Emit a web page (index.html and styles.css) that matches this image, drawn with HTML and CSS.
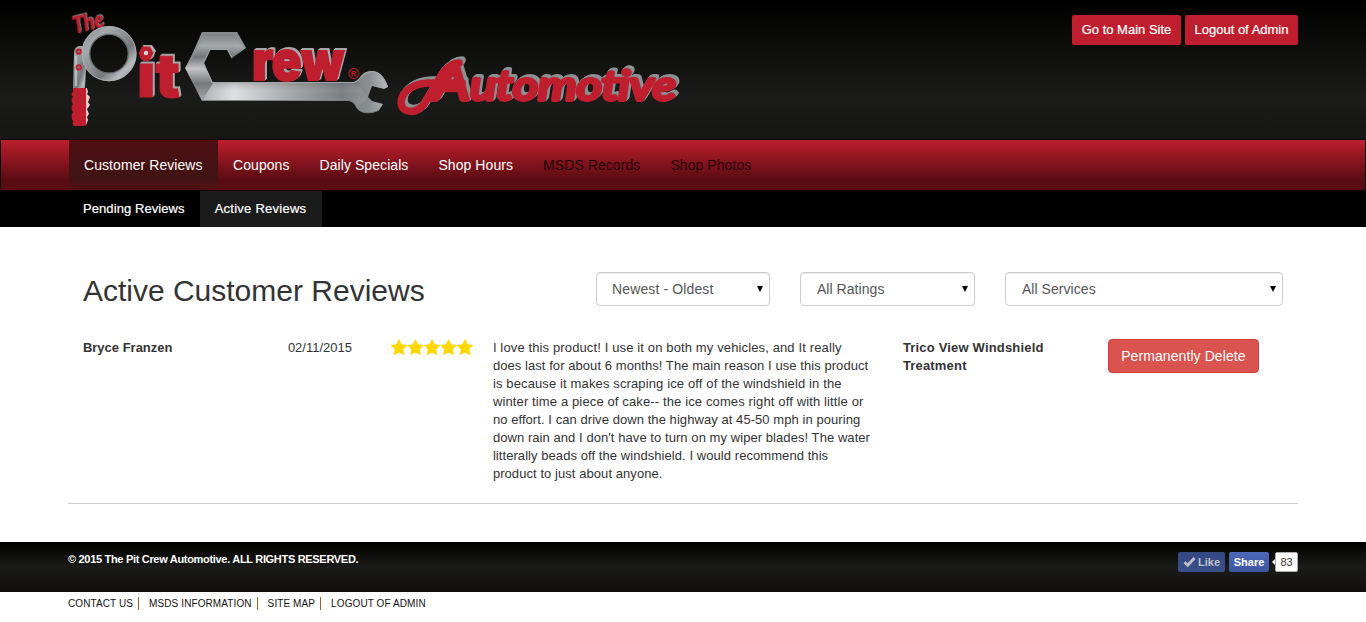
FILE: index.html
```html
<!DOCTYPE html>
<html lang="en">
<head>
<meta charset="utf-8">
<title>Active Customer Reviews</title>
<link rel="stylesheet" href="styles.css">
</head>
<body>
<header class="header">
  <div class="container header-inner">
    <svg class="logo" width="620" height="138" viewBox="68 0 620 138" role="img" aria-label="The Pit Crew Automotive">
      <defs>
        <linearGradient id="steel" x1="0" y1="0" x2="1" y2="1">
          <stop offset="0" stop-color="#8b8e91"/><stop offset=".22" stop-color="#a7aaac"/><stop offset=".45" stop-color="#8e9194"/><stop offset=".65" stop-color="#74787b"/><stop offset=".85" stop-color="#b8babd"/><stop offset="1" stop-color="#8b8e91"/>
        </linearGradient>
        <linearGradient id="wrench" gradientUnits="userSpaceOnUse" x1="202" y1="0" x2="388" y2="0">
          <stop offset="0" stop-color="#a9acae"/><stop offset=".17" stop-color="#dddee0"/><stop offset=".45" stop-color="#a5a8aa"/><stop offset=".75" stop-color="#74787b"/><stop offset=".9" stop-color="#8c8f92"/><stop offset="1" stop-color="#b8babc"/>
        </linearGradient>
        <linearGradient id="jaw" gradientUnits="userSpaceOnUse" x1="0" y1="32" x2="0" y2="101">
          <stop offset="0" stop-color="#777b7e"/><stop offset=".2" stop-color="#a6a9ab"/><stop offset=".36" stop-color="#73777a"/><stop offset=".53" stop-color="#c1c3c5"/><stop offset=".75" stop-color="#74777a"/><stop offset="1" stop-color="#aaadaf"/>
        </linearGradient>
        <linearGradient id="shade" x1="0" y1="0" x2="0" y2="1">
          <stop offset="0" stop-color="#333" stop-opacity=".35"/><stop offset=".5" stop-color="#fff" stop-opacity=".05"/><stop offset="1" stop-color="#fff" stop-opacity=".1"/>
        </linearGradient>
      </defs>

      <g class="logo-the" transform="translate(75 34) rotate(-14)">
        <text x="0" y="0" textLength="31" lengthAdjust="spacingAndGlyphs">The</text>
      </g>

      <!-- ratchet -->
      <path d="M74 54Q74 46 80 46L85 46L84 62L86 68L85 88H73Z" fill="url(#steel)"/>
      <path d="M76 56V86" stroke="#c6c8ca" stroke-width="1.5"/>
      <circle cx="109" cy="53.700" r="23.300" fill="none" stroke="url(#steel)" stroke-width="8.600"/>
      <circle cx="109" cy="53.700" r="19.300" fill="none" stroke="#65696c" stroke-width="1.200"/>
      <circle cx="109" cy="53.700" r="27" fill="none" stroke="#adb0b2" stroke-width=".8"/>
      <circle cx="78.700" cy="51.700" r="2.200" fill="#777" stroke="#be1e2d" stroke-width="1.800"/>
      <circle cx="78.700" cy="67.400" r="2.200" fill="#777" stroke="#be1e2d" stroke-width="1.800"/>
      <path d="M75 88H87L88 92L87 94L90 97L88 102L90 105L87 109L89 114L87 117L88 120L86 125H75Z" fill="#f2c9ca"/>
      <path d="M73 88H86V124Q86 126 84 126H74Q72 125 73 121Q70 116 73 112Q70 108 73 104Q70 100 73 97Q70 94 73 92Z" fill="#be1e2d"/>

      <!-- lettering and hex nut -->
      <g class="logo-block logo-it">
        <text x="137" y="96.500" textLength="43" lengthAdjust="spacingAndGlyphs">it</text>
      </g>
      <path d="M143 45H152L156 51L151 59H145Z" fill="#adb0b2"/>
      <path d="M138.500 53L142 46.500H150L153.500 53L150 59.500H142Z" fill="#be1e2d"/>
      <circle cx="146" cy="53" r="2.200" fill="#d7d7d7"/>

      <!-- open-ended wrench -->
      <path d="M202 101L212 82H353C361 82 360 71 373 71C381 72 386 80 388 87L384 89L372 86L368 97L372 101L383 104L379 110C372 114 361 114 357 108C354 102 352 100 343 100Z" fill="url(#wrench)"/>
      <path d="M202 101L212 82H353L357 80L367 98L357 108Q352 100 343 100Z" fill="url(#shade)"/>
      <path d="M202 32H237L246 48L232 58L227 49H210L203.500 63L213 83L202 101L185 68L193 53Z" fill="url(#jaw)"/>
      <path d="M202 32H237L246 48L243 48L235 34H204L196 52L186 68Z" fill="#8d9093" opacity=".7"/>
      <path d="M232 58L227.500 49.500H210L203.500 63L212 82.500H353C361 82 360 71 373 71.500C381 72 385 80 387.500 87" fill="none" stroke="#a5a8aa" stroke-width="1.200"/>
      <path d="M202 100.500H343C352 100 354 102 357 108C361 114 372 114 379 110" fill="none" stroke="#7d8183"/>

      <g class="logo-block logo-rew">
        <text x="252" y="79.500" textLength="92" lengthAdjust="spacingAndGlyphs">rew</text>
      </g>
      <text class="logo-reg" x="348" y="78.500">®</text>

      <!-- script wordmark with its loop -->
      <g class="logo-script">
        <path d="M462 83H428C411 84 401 93 401 103C402 114 417 114 424 104L442 74Q450 63 459 63"/>
        <text x="433" y="99.500" textLength="243" lengthAdjust="spacingAndGlyphs"><tspan class="cap">A</tspan>utomotive</text>
      </g>
    </svg>
    <div class="header-actions">
      <a class="btn-top">Go to Main Site</a>
      <a class="btn-top btn-logout">Logout of Admin</a>
    </div>
  </div>
</header>

<nav class="navbar">
  <div class="container nav-list">
    <a class="nav-item active">Customer Reviews</a>
    <a class="nav-item">Coupons</a>
    <a class="nav-item">Daily Specials</a>
    <a class="nav-item">Shop Hours</a>
    <a class="nav-item disabled">MSDS Records</a>
    <a class="nav-item disabled">Shop Photos</a>
  </div>
</nav>
<nav class="subnav">
  <div class="container nav-list">
    <a class="sub-item">Pending Reviews</a>
    <a class="sub-item active">Active Reviews</a>
  </div>
</nav>

<main class="container">
  <div class="grid filters">
    <h1 class="title">Active Customer Reviews</h1>
    <div class="select sort">Newest - Oldest<i class="caret"></i></div>
    <div class="select">All Ratings<i class="caret"></i></div>
    <div class="select wide">All Services<i class="caret"></i></div>
  </div>
  <div class="grid review">
    <strong class="c2">Bryce Franzen</strong>
    <span>02/11/2015</span>
    <svg class="stars" width="84" height="18" viewBox="0 0 84 18" aria-label="5 stars">
      <defs><path id="star" d="M8.500 0L11.200 5.300L17 6.100L12.800 10.200L13.800 16.200L8.500 13.400L3.200 16.200L4.200 10.200L0 6.100L5.800 5.300Z"/></defs>
      <g fill="#ffd700"><use href="#star" x=".5"/><use href="#star" x="17"/><use href="#star" x="33.500"/><use href="#star" x="50"/><use href="#star" x="66.500"/></g>
    </svg>
    <p class="review-text"><span class="loose">I love this product! I use it on both my vehicles, and It really</span><br>does last for about 6 months! The main reason I use this product<br><span class="loose">is because it makes scraping ice off of the windshield in the</span><br><span class="loose">winter time a piece of cake-- the ice comes right off with little or</span><br>no effort. I can drive down the highway at 45-50 mph in pouring<br>down rain and I don't have to turn on my wiper blades! The water<br>litterally beads off the windshield. I would recommend this<br>product to just about anyone.</p>
    <strong class="c2 service">Trico View Windshield<br>Treatment</strong>
    <div class="c2"><a class="btn-delete">Permanently Delete</a></div>
  </div>
</main>

<footer>
  <div class="footer-bar">
    <div class="container footer-inner">
      <strong class="copyright">© 2015 The Pit Crew Automotive. ALL RIGHTS RESERVED.</strong>
      <div class="social">
        <span class="fb like"><svg width="13" height="12" viewBox="0 0 13 12"><path d="M1.500 6.200L4.800 9.300L11.500 2" fill="none" stroke="#bdc1cb" stroke-width="2.800"/></svg>Like</span>
        <span class="fb share">Share</span>
        <span class="count">83</span>
      </div>
    </div>
  </div>
  <div class="container footer-links">
    <a>CONTACT US</a><a>MSDS INFORMATION</a><a>SITE MAP</a><a>LOGOUT OF ADMIN</a>
  </div>
</footer>
</body>
</html>
```
FILE: styles.css
```css
* { box-sizing: border-box; }
body { margin: 0; background: #fff; color: #333; font: 13px/18px "Liberation Sans", Arial, sans-serif; overflow: hidden; }
.container { width: 1230px; margin: 0 auto; }

.header { height: 139px; background: linear-gradient(#000, #1b1b19 70%, #161614); }
.header-inner { display: flex; justify-content: space-between; align-items: flex-start; }
.logo { display: block; }
.logo text { fill: #be1e2d; stroke: #be1e2d; }
.logo-the text { font: italic bold 22px Lato, sans-serif; stroke-width: .6; }
.logo-the { filter: drop-shadow(1px -.5px 0 #8b8688); }
.logo-block text { font: 900 60px Inter, sans-serif; stroke-width: 1; }
.logo-block { filter: drop-shadow(1px -1px 0 #a9abad) drop-shadow(1px -1px 0 #a3a5a7); }
.logo-rew text { font-size: 54px; stroke-width: 2; }
.logo .logo-reg { font: bold 15px "Liberation Sans", sans-serif; stroke: none; }
.logo-script { filter: drop-shadow(1px -1px 0 #85888a) drop-shadow(1px -1px 0 #929597) drop-shadow(1px -1px 0 #8a8d8f); }
.logo-script text { font: italic 400 41px Lato, sans-serif; stroke-linejoin: round; stroke-width: 4; }
.logo-script .cap { font-size: 49px; }
.logo-script path { fill: none; stroke: #be1e2d; stroke-width: 7.5; stroke-linecap: round; }

.header-actions { display: flex; gap: 4px; padding-top: 15px; }
.btn-top { width: 109px; height: 30px; border-radius: 2px; background: #be1e2d; color: #fff; text-align: center; line-height: 30px; font-size: 13px; white-space: nowrap; -webkit-text-stroke: .2px #fff; }
.btn-logout { width: 113px; }

.navbar { height: 52px; border: 1px solid #080808; border-bottom-color: #000; background: linear-gradient(#be1e2d, #590c12 80%, #590c12); }
.nav-list { display: flex; }
.navbar .nav-list { padding-left: 1px; }
.nav-item { padding: 0 15px; line-height: 50px; font-size: 14px; color: #fff; white-space: nowrap; letter-spacing: .07px; }
.nav-item.active { width: 149px; background: linear-gradient(#4f0e12, #401414 75%, #541013); }
.nav-item.disabled { color: #250408; }

.subnav { height: 36px; background: #000; }
.sub-item { padding: 0 15px; line-height: 35px; height: 36px; color: #fff; -webkit-text-stroke: .2px #fff; letter-spacing: .08px; }
.sub-item.active { width: 122px; background: #1b1b1b; letter-spacing: .25px; }

.grid { display: grid; grid-template-columns: repeat(12, 72.5px); column-gap: 30px; padding: 0 15.1px 0 14.9px; }
.filters { padding-top: 45px; }
.title { grid-column: span 5; margin: 0; font-size: 30px; line-height: 38px; font-weight: normal; white-space: nowrap; }
.select { grid-column: span 2; display: flex; justify-content: space-between; align-items: center; height: 34px; padding: 0 6px 0 15.5px; border: 1px solid #ccc; border-radius: 4px; box-shadow: inset 0 1px 1px rgba(0,0,0,.075); font-size: 14px; color: #555; letter-spacing: .06px; }
.select.sort { margin-left: .2px; letter-spacing: .12px; }
.select.wide { grid-column: span 3; }
.caret { border: 3px solid transparent; border-top: 6px solid #000; border-bottom: 0; }

.review { height: 194px; padding-top: 29px; border-bottom: 1px solid #ccc; align-items: start; }
.review .c2 { grid-column: span 2; white-space: nowrap; }
.review .service { letter-spacing: .18px; }
.stars { display: block; }
.review-text { grid-column: span 4; margin: 0; white-space: nowrap; letter-spacing: .065px; }
.loose { letter-spacing: .13px; }
.btn-delete { display: block; width: 151px; height: 34px; border: 1px solid #d43f3a; border-radius: 4px; background: #d9534f; color: #fff; text-align: center; line-height: 32px; font-size: 14px; letter-spacing: .08px; }

.footer-bar { height: 50px; margin-top: 38px; background: linear-gradient(#000, #1b1b19 50%, #100f0e); }
.footer-inner { display: flex; justify-content: space-between; padding-top: 10px; }
.copyright { font-size: 11px; line-height: 15px; color: #fff; letter-spacing: -.31px; }
.social { display: flex; gap: 4px; font-size: 11px; line-height: 20px; }
.fb { height: 20px; border-radius: 2px; color: #fff; font-weight: bold; text-align: center; background: linear-gradient(#4d69ba, #3d55a0); }
.like { display: flex; align-items: center; justify-content: center; gap: 2px; width: 47px; background: linear-gradient(#334880, #3a5088); color: #bdc1cb; }
.share { width: 40px; }
.count { position: relative; width: 23px; height: 20px; margin-left: 2px; border: 1px solid #aaa; border-radius: 2px; background: #fff; line-height: 18px; text-align: center; }
.count::before { content: ""; position: absolute; left: -4px; top: 6px; border: 3px solid transparent; border-right-color: #fff; border-left: 0; }
.footer-links { display: flex; padding-top: 5px; color: #111; font-size: 10px; line-height: 13px; letter-spacing: .1px; }
.footer-links a { white-space: nowrap; }
.footer-links a + a { margin-left: 5px; padding-left: 10px; border-left: 1px solid #a0622d; }
```
